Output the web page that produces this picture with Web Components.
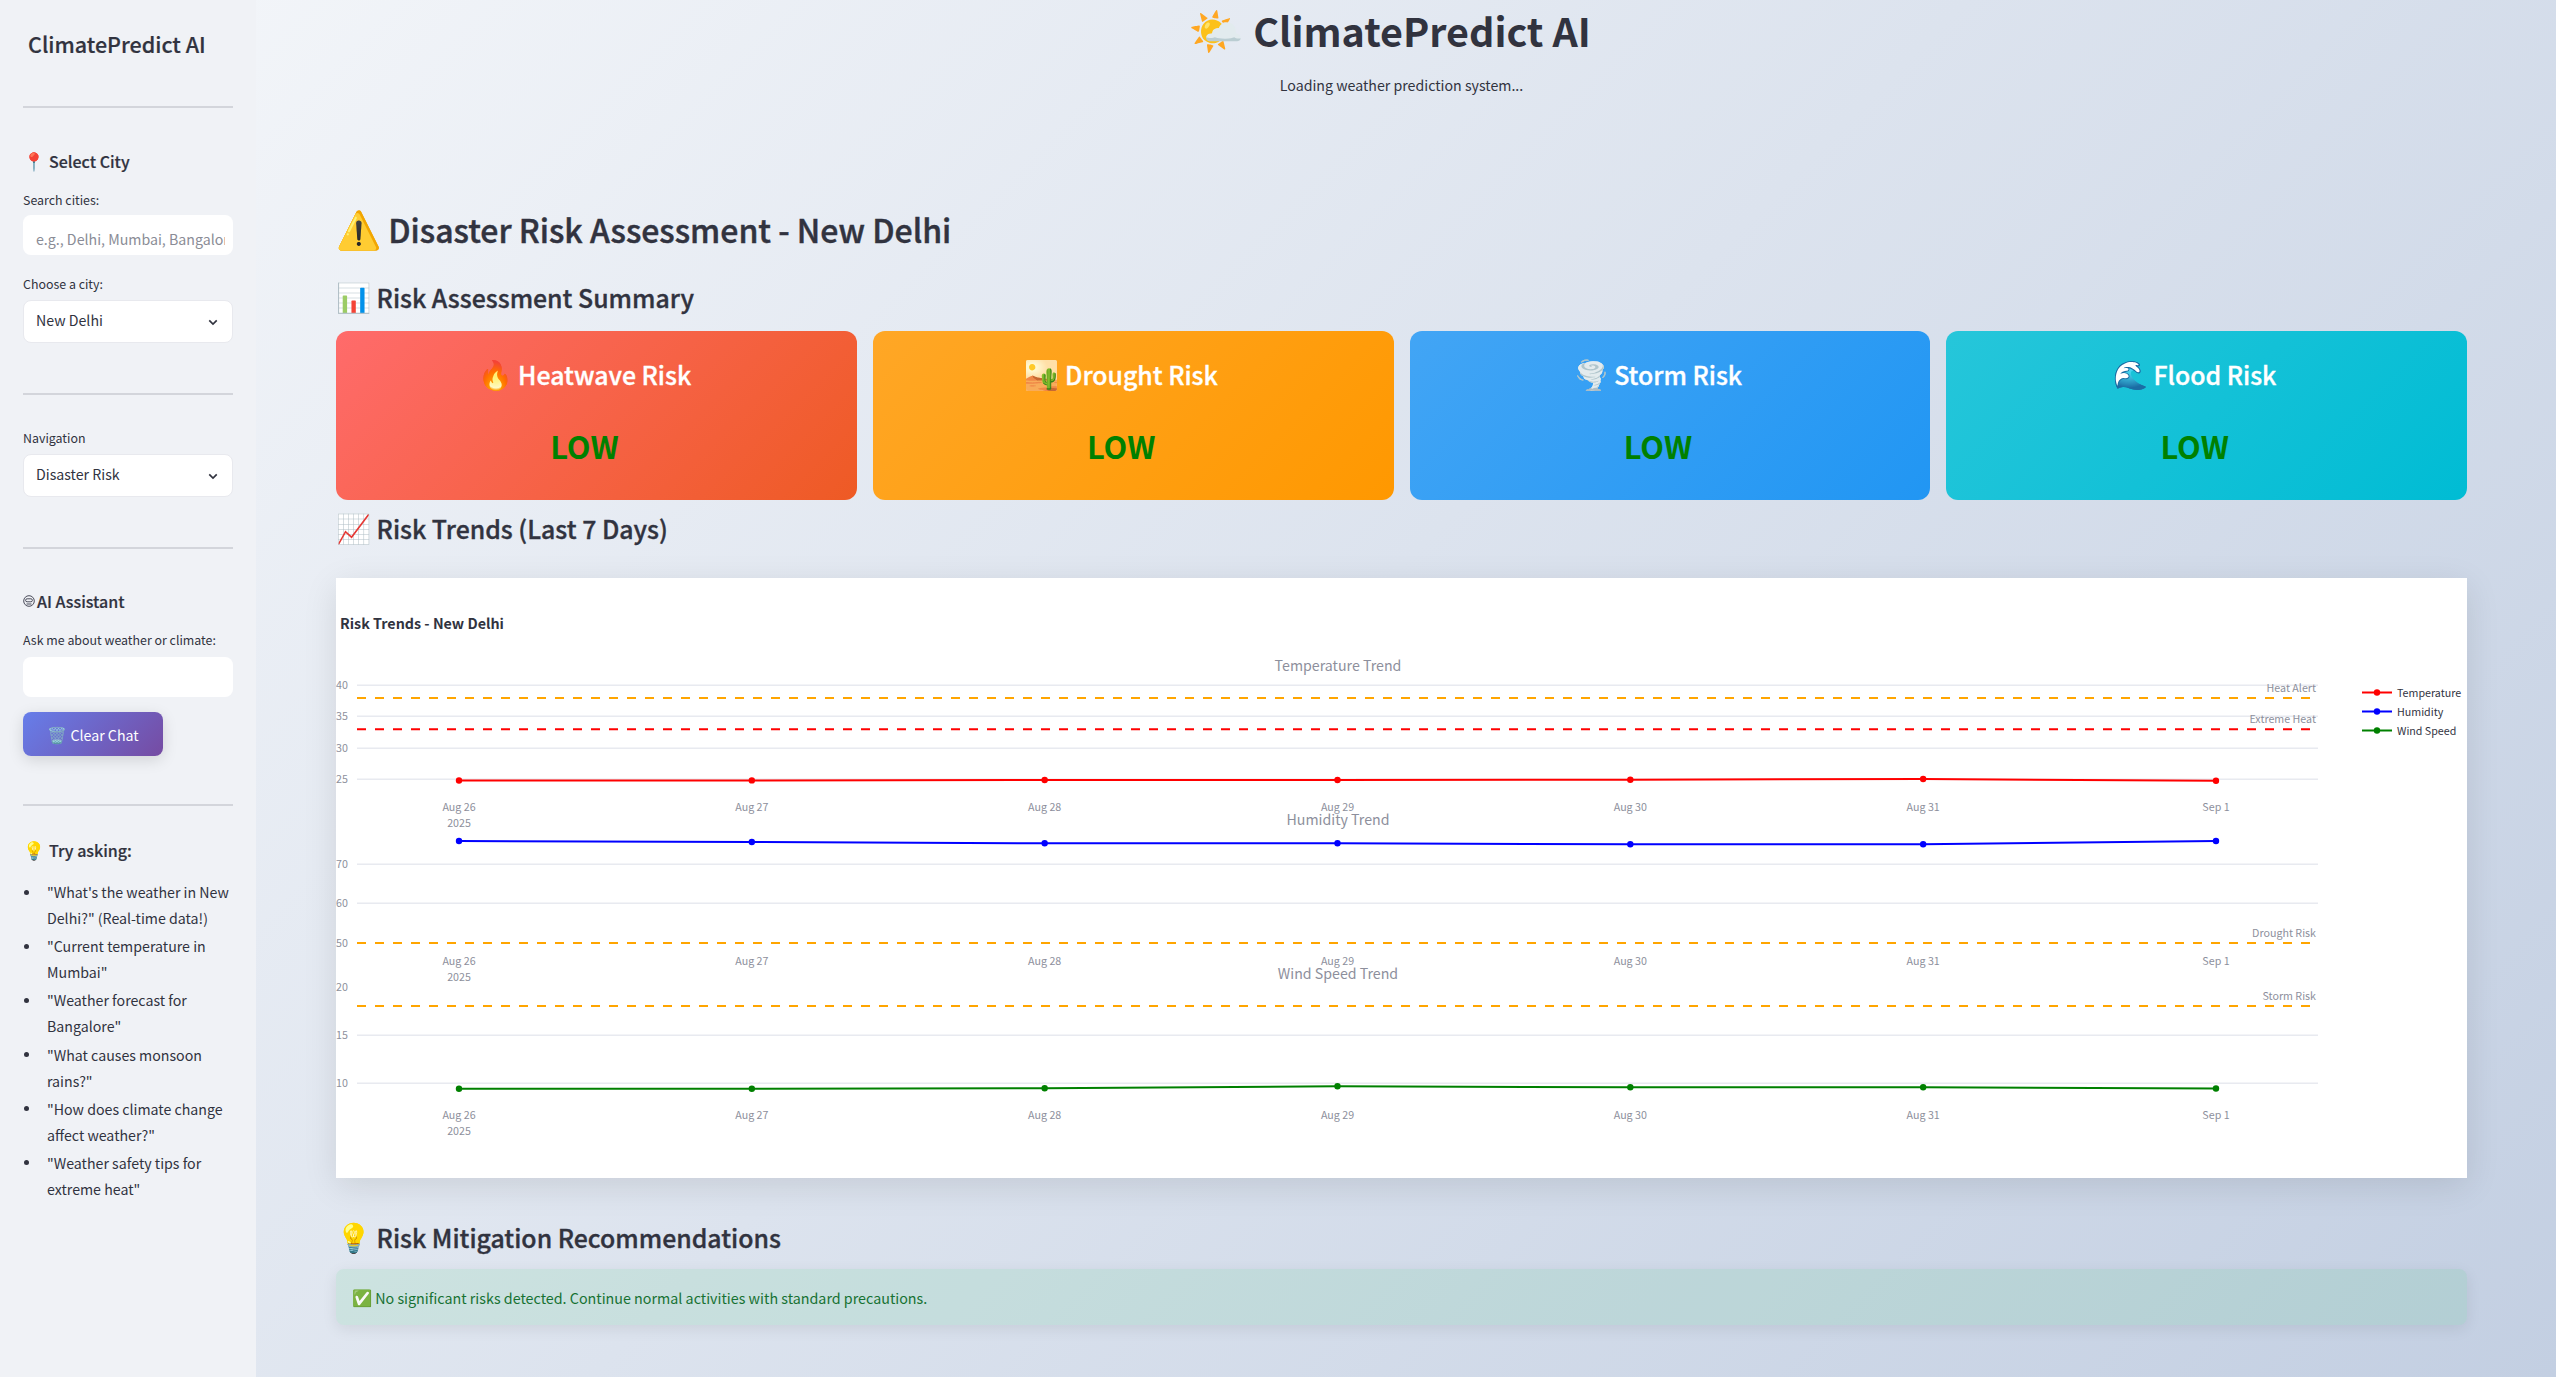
<!DOCTYPE html>
<html lang="en">
<head>
<meta charset="utf-8">
<title>ClimatePredict AI</title>
<style>
  html, body { margin: 0; height: 100%; }
  body {
    font-family: "Noto Sans CJK SC", "Noto Sans", sans-serif;
    color: #31333f;
    background: linear-gradient(135deg, #f5f7fa 0%, #c3cfe2 100%);
    overflow: hidden;
  }
  cp-app { height: 1377px; }
  .e { font-size: 1.14em; }
</style>
</head>
<body>
<cp-app>
  <cp-sidebar slot="side"></cp-sidebar>
  <cp-header></cp-header>
  <cp-heading level="1" style="margin-top:108px"><span class="e">⚠️</span> Disaster Risk Assessment - New Delhi</cp-heading>
  <cp-heading level="2" style="margin-top:21.5px"><span class="e">📊</span> Risk Assessment Summary</cp-heading>
  <div style="display:grid;grid-template-columns:repeat(4,1fr);gap:16px;margin-top:14px">
    <risk-card title-text="🔥|Heatwave Risk" from="#ff6b6b" to="#ee5a24"></risk-card>
    <risk-card title-text="🏜️|Drought Risk" from="#ffa726" to="#ff9800"></risk-card>
    <risk-card title-text="🌪️|Storm Risk" from="#42a5f5" to="#2196f3"></risk-card>
    <risk-card title-text="🌊|Flood Risk" from="#26c6da" to="#00bcd4"></risk-card>
  </div>
  <cp-heading level="2" style="margin-top:7px"><span class="e">📈</span> Risk Trends (Last 7 Days)</cp-heading>
  <trend-chart style="margin-top:30.5px"></trend-chart>
  <cp-heading level="2" style="margin-top:37.5px"><span class="e">💡</span> Risk Mitigation Recommendations</cp-heading>
  <cp-alert style="margin-top:12.5px"><span class="e">✅</span> No significant risks detected. Continue normal activities with standard precautions.</cp-alert>
</cp-app>

<script>
class CpApp extends HTMLElement {
  constructor() {
    super();
    this.attachShadow({ mode: "open" }).innerHTML = `<style>
      :host { display: grid; grid-template-columns: 256px 1fr; }
      main { padding: 0 89px 0 80px; min-width: 0; display: flex; flex-direction: column; }
    </style>
    <slot name="side"></slot>
    <main><slot></slot></main>`;
  }
}

class CpSidebar extends HTMLElement {
  constructor() {
    super();
    const asks = [
      "\"What's the weather in New Delhi?\" (Real-time data!)",
      "\"Current temperature in Mumbai\"",
      "\"Weather forecast for Bangalore\"",
      "\"What causes monsoon rains?\"",
      "\"How does climate change affect weather?\"",
      "\"Weather safety tips for extreme heat\""
    ];
    const chevron = `<svg viewBox="0 0 12 8"><path d="M1.5 1.5 6 6l4.5-4.5" fill="none" stroke="#31333f" stroke-width="2"/></svg>`;
    this.attachShadow({ mode: "open" }).innerHTML = `<style>
      :host { display: block; background: #f0f2f6; padding: 0 23px; font-size: 14.2px; }
      h1 { font-size: 21.5px; font-weight: 500; margin: 0; padding: 27px 0 0 5px; line-height: 34px; -webkit-text-stroke: .2px; }
      hr { border: 0; border-top: 2px solid #d3d5db; margin: 0; height: 0; }
      h3 { font-size: 16px; font-weight: 500; margin: 0; line-height: 24px; white-space: nowrap; display: flex; align-items: center; -webkit-text-stroke: .2px; }
      h3 .e { font-size: 17.6px; width: 26px; }
      label { display: block; font-size: 12.4px; line-height: 20px; white-space: nowrap; }
      .box {
        box-sizing: border-box; height: 40px; width: 100%; background: #fff; border-radius: 8px;
        font: inherit; padding: 8px 8px 0 13px; border: 0; display: block; outline: none; color: #31333f;
      }
      .box::placeholder { color: #8a8c96; opacity: 1; }
      .select {
        height: 43px; border: 1.5px solid #e8e9ee; display: flex; align-items: center;
        justify-content: space-between; padding: 0 14px 4px 12px;
      }
      .select svg { width: 10px; height: 7px; margin-top: 6px; }
      button {
        display: block; width: 140px; height: 44px; border: 0; border-radius: 8px; font: inherit; font-size: 14.2px;
        color: #fff; background: linear-gradient(135deg, #667eea 0%, #764ba2 100%);
        box-shadow: 0 4px 15px rgba(0,0,0,.13); padding: 0;
      }
      button .e { font-size: 16px; }
      ul { margin: 0; padding: 0 0 0 24px; list-style: none; }
      li { line-height: 26px; margin-bottom: 2.2px; display: flex; }
      li::before {
        content: ""; flex: none; width: 5px; height: 5px; border-radius: 50%; background: #31333f;
        margin: 10.5px 18.5px 0 -23.5px;
      }
      .bot { width: 12px; height: 12px; margin-right: 2px; flex: none; }
    </style>
    <h1>ClimatePredict AI</h1>
    <hr style="margin-top:45px">
    <h3 style="margin-top:41px"><span class="e">📍</span>Select City</h3>
    <label style="margin-top:17px">Search cities:</label>
    <input class="box" style="margin-top:5px" placeholder="e.g., Delhi, Mumbai, Bangalore">
    <label style="margin-top:19px">Choose a city:</label>
    <div class="box select" style="margin-top:6px"><span>New Delhi</span>${chevron}</div>
    <hr style="margin-top:50px">
    <label style="margin-top:33px">Navigation</label>
    <div class="box select" style="margin-top:6px"><span>Disaster Risk</span>${chevron}</div>
    <hr style="margin-top:50px">
    <h3 style="margin-top:40px"><svg class="bot" viewBox="0 0 12 12" fill="none" stroke="#4a4c5a" stroke-width="1">
      <circle cx="6" cy="6" r="5.3"/><rect x="2.6" y="3.8" width="6.8" height="3" rx="1.5"/><path d="M3.5 9h5"/></svg>AI Assistant</h3>
    <label style="margin-top:17px">Ask me about weather or climate:</label>
    <input class="box" style="margin-top:7px">
    <button style="margin-top:15px"><span class="e">🗑️</span> Clear Chat</button>
    <hr style="margin-top:48px">
    <h3 style="margin-top:32px"><span class="e">💡</span>Try asking:</h3>
    <ul style="margin-top:17px">${asks.map(a => `<li><span>${a}</span></li>`).join("")}</ul>`;
  }
}

class CpHeader extends HTMLElement {
  constructor() {
    super();
    this.attachShadow({ mode: "open" }).innerHTML = `<style>
      :host { display: block; text-align: center; }
      h1 { margin: 0; padding-right: 24px; font-size: 39.5px; font-weight: 700; line-height: 56px; }
      h1 span { font-size: 44.8px; }
      p { margin: 17px 0 0; font-size: 14.2px; line-height: 20px; }
    </style>
    <h1><span>🌤️</span> ClimatePredict AI</h1>
    <p>Loading weather prediction system...</p>`;
  }
}

class CpHeading extends HTMLElement {
  constructor() {
    super();
    const big = this.getAttribute("level") === "1";
    this.attachShadow({ mode: "open" }).innerHTML = `<style>
      :host { display: block; font-weight: 500; white-space: nowrap; -webkit-text-stroke: ${big ? .45 : .35}px;
        font-size: ${big ? 32 : 24.85}px; line-height: ${big ? 50 : 40}px; }
    </style><slot></slot>`;
  }
}

class RiskCard extends HTMLElement {
  constructor() {
    super();
    const [icon, name] = this.getAttribute("title-text").split("|");
    this.attachShadow({ mode: "open" }).innerHTML = `<style>
      :host { display: flex; flex-direction: column; align-items: center; height: 169px; border-radius: 12px; color: #fff;
        background: linear-gradient(135deg, ${this.getAttribute("from")}, ${this.getAttribute("to")}); }
      h3 { margin: 22px 24px 0 0; font-size: 24.85px; font-weight: 500; line-height: 40px; -webkit-text-stroke: .35px; }
      h3 span { font-size: 28px; }
      p { margin: 30px 24px 0 0; font-size: 30.8px; font-weight: 700; line-height: 44px; color: green; }
    </style>
    <h3><span>${icon}</span> ${name}</h3>
    <p>LOW</p>`;
  }
}

class TrendChart extends HTMLElement {
  constructor() {
    super();
    const L = 357 - 336, R = 2318 - 336, T = 578;
    const xs = [0, 1, 2, 3, 4, 5, 6].map(i => 459 - 336 + 292.83 * i);
    const dates = ["Aug 26", "Aug 27", "Aug 28", "Aug 29", "Aug 30", "Aug 31", "Sep 1"];
    const y = v => v - T;
    let s = "";
    const grid = v => { s += `<line x1="${L}" x2="${R}" y1="${y(v)}" y2="${y(v)}" stroke="#e8eaf0" stroke-width="1.5"/>`; };
    const dash = (v, c) => { s += `<line x1="${L}" x2="${R - 8}" y1="${y(v)}" y2="${y(v)}" stroke="${c}" stroke-width="2" stroke-dasharray="9 9"/>`; };
    const tick = (v, t) => { s += `<text x="0" y="${y(v) + 4}" class="t">${t}</text>`; };
    const note = (v, t) => { s += `<text x="${R - 2}" y="${y(v)}" class="t" text-anchor="end">${t}</text>`; };
    const title = (v, t) => { s += `<text x="${1338 - 336}" y="${y(v)}" class="h" text-anchor="middle">${t}</text>`; };
    const series = (ys, c) => {
      s += `<polyline fill="none" stroke="${c}" stroke-width="2" points="${xs.map((x, i) => `${x},${y(ys[i])}`).join(" ")}"/>`;
      xs.forEach((x, i) => { s += `<circle cx="${x}" cy="${y(ys[i])}" r="3.2" fill="${c}"/>`; });
    };
    const axis = v => xs.forEach((x, i) => {
      s += `<text x="${x}" y="${y(v)}" class="t" text-anchor="middle">${dates[i]}</text>`;
      if (i === 0) s += `<text x="${x}" y="${y(v + 16)}" class="t" text-anchor="middle">2025</text>`;
    });

    [685.3, 716.3, 748.3, 779.3, 864.3, 903.3, 1035.3, 1083.3].forEach(grid);
    [[685.3, "40"], [716.3, "35"], [748.3, "30"], [779.3, "25"], [864.3, "70"], [903.3, "60"], [943, "50"], [987, "20"], [1035.3, "15"], [1083.3, "10"]]
      .forEach(a => tick(a[0], a[1]));
    dash(698, "#ffa500"); dash(729.3, "#ff0000"); dash(943, "#ffa500"); dash(1006, "#ffa500");
    note(692, "Heat Alert"); note(723, "Extreme Heat"); note(937, "Drought Risk"); note(1000, "Storm Risk");
    title(671, "Temperature Trend"); title(825, "Humidity Trend"); title(979, "Wind Speed Trend");
    axis(811); axis(965); axis(1119);
    series([780.5, 780.4, 780, 780, 779.7, 779, 780.7], "#ff0000");
    series([841, 842, 843.3, 843.3, 844.3, 844.3, 841], "#0000ff");
    series([1088.7, 1088.7, 1088.3, 1086.3, 1087.3, 1087.3, 1088.5], "#008000");

    [["#ff0000", "Temperature", 692.5], ["#0000ff", "Humidity", 711.5], ["#008000", "Wind Speed", 730.5]].forEach(l => {
      s += `<line x1="${2362 - 336}" x2="${2392 - 336}" y1="${y(l[2])}" y2="${y(l[2])}" stroke="${l[0]}" stroke-width="2"/>`;
      s += `<circle cx="${2377 - 336}" cy="${y(l[2])}" r="3.2" fill="${l[0]}"/>`;
      s += `<text x="${2397 - 336}" y="${y(l[2]) + 4}" class="l">${l[1]}</text>`;
    });

    this.attachShadow({ mode: "open" }).innerHTML = `<style>
      :host { display: block; height: 600px; background: #fff; box-shadow: 0 8px 32px rgba(0,0,0,.1); }
      svg { display: block; width: 100%; height: 100%; }
      text { font-family: "Noto Sans CJK SC", "Noto Sans", sans-serif; }
      .t { font-size: 10.7px; fill: #8d8f9c; }
      .h { font-size: 14.2px; fill: #8d8f9c; }
      .l { font-size: 10.7px; fill: #31333f; }
      .m { font-size: 14.3px; font-weight: 700; fill: #31333f; }
    </style>
    <svg viewBox="0 0 2131 600" preserveAspectRatio="none">
      <text x="4" y="51" class="m">Risk Trends - New Delhi</text>
      ${s}
    </svg>`;
  }
}

class CpAlert extends HTMLElement {
  constructor() {
    super();
    this.attachShadow({ mode: "open" }).innerHTML = `<style>
      :host { display: block; line-height: 56px; height: 56px; box-sizing: border-box; padding: 0 16px; border-radius: 8px;
        font-size: 14.3px; color: #177233; background: rgba(33, 195, 84, .1);
        box-shadow: 0 4px 15px rgba(0,0,0,.08); }
    </style><slot></slot>`;
  }
}

customElements.define("cp-app", CpApp);
customElements.define("cp-sidebar", CpSidebar);
customElements.define("cp-header", CpHeader);
customElements.define("cp-heading", CpHeading);
customElements.define("risk-card", RiskCard);
customElements.define("trend-chart", TrendChart);
customElements.define("cp-alert", CpAlert);
</script>
</body>
</html>
